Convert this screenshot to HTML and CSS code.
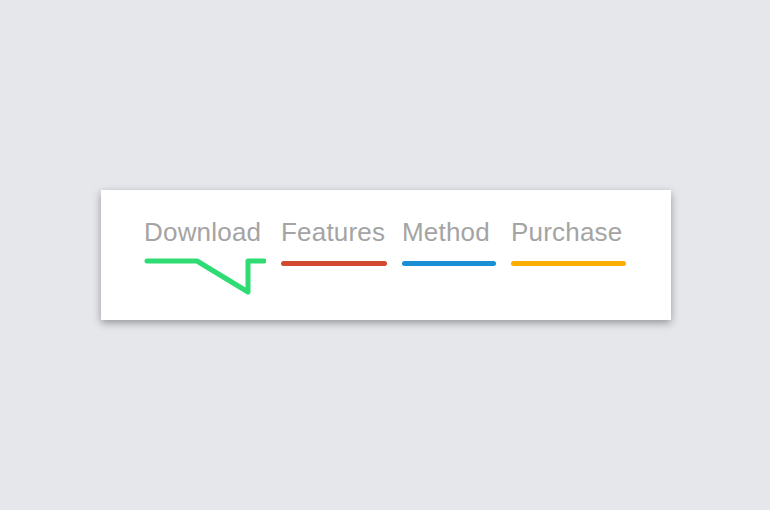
FILE: index.html
```html
<!DOCTYPE html>
<html>
<head>
<meta charset="utf-8">
<link rel="stylesheet" href="styles.css">
</head>
<body>
<div class="card">
  <nav class="menu">
    <a class="item item-download">
      <span class="label">Download</span>
      <svg class="zig" width="122" height="38" viewBox="0 0 122 38">
        <polyline points="3,3 53,3 104,34 104,3 120,3" fill="none" stroke="#2edc73" stroke-width="5" stroke-linecap="round" stroke-linejoin="round"/>
      </svg>
    </a>
    <a class="item item-features">
      <span class="label">Features</span>
      <span class="bar bar-red"></span>
    </a>
    <a class="item item-method">
      <span class="label">Method</span>
      <span class="bar bar-blue"></span>
    </a>
    <a class="item item-purchase">
      <span class="label">Purchase</span>
      <span class="bar bar-orange"></span>
    </a>
  </nav>
</div>
</body>
</html>
```
FILE: styles.css
```css
html, body {
  margin: 0;
  padding: 0;
}
body {
  box-sizing: border-box;
  width: 770px;
  height: 510px;
  padding-left: 2px;
  background: #e6e7eb;
  display: flex;
  align-items: center;
  justify-content: center;
  font-family: "Liberation Sans", Arial, sans-serif;
}
.card {
  box-sizing: border-box;
  width: 570px;
  height: 130px;
  background: #ffffff;
  box-shadow: 0 3px 8px rgba(0, 0, 0, 0.35);
  padding: 27px 44px 0 43px;
}
.menu {
  display: flex;
  gap: 15px;
}
.item {
  display: flex;
  flex-direction: column;
}
.item-download { width: 122px; }
.item-features { width: 106px; }
.item-method { width: 94px; }
.item-purchase { width: 115px; }
.label {
  font-size: 26px;
  line-height: 30px;
  letter-spacing: 0.2px;
  color: #a4a4a4;
  white-space: nowrap;
}
.zig {
  display: block;
  margin-top: 11px;
}
.bar {
  display: block;
  height: 5px;
  border-radius: 3px;
  margin-top: 14px;
}
.bar-red { background: #d24a30; }
.bar-blue { background: #1a8fd5; }
.bar-orange { background: #fdae00; }
```
